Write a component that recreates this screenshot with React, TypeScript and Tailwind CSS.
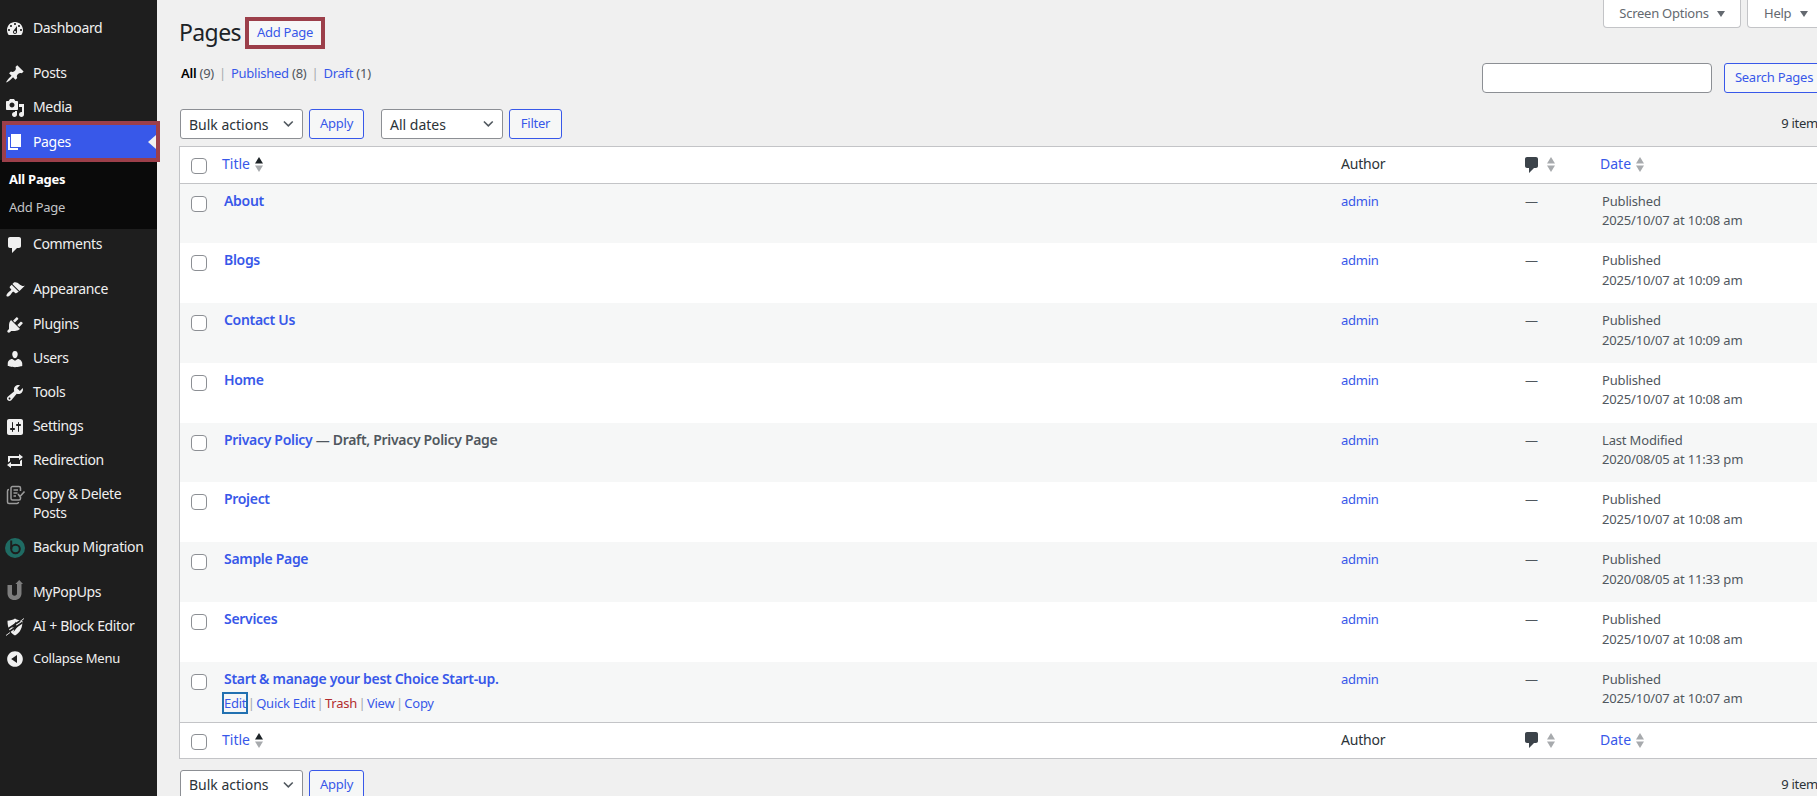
import React from "react";

const P: Record<string, string> = {
  dashboard: "M3.76 16h12.48c1.1-1.37 1.76-3.11 1.76-5 0-4.42-3.58-8-8-8s-8 3.58-8 8c0 1.89.66 3.63 1.76 5zM10 4c.55 0 1 .45 1 1s-.45 1-1 1-1-.45-1-1 .45-1 1-1zM6 6c.55 0 1 .45 1 1s-.45 1-1 1-1-.45-1-1 .45-1 1-1zm8 0c.55 0 1 .45 1 1s-.45 1-1 1-1-.45-1-1 .45-1 1-1zm-5.37 5.55L12 7v6c0 1.1-.9 2-2 2s-2-.9-2-2c0-.57.24-1.08.63-1.45zM4 10c.55 0 1 .45 1 1s-.45 1-1 1-1-.45-1-1 .45-1 1-1zm12 0c.55 0 1 .45 1 1s-.45 1-1 1-1-.45-1-1 .45-1 1-1zm-5 3c0-.55-.45-1-1-1s-1 .45-1 1 .45 1 1 1 1-.45 1-1z",
  post: "M10.44 3.02l1.82-1.82 6.36 6.35-1.83 1.82c-1.05-.68-2.48-.57-3.41.36l-.75.75c-.92.93-1.04 2.35-.35 3.41l-1.83 1.82-2.41-2.41-2.8 2.79c-.42.42-3.38 2.71-3.8 2.29s1.86-3.39 2.28-3.81l2.79-2.79L4.1 9.36l1.83-1.82c1.05.69 2.48.57 3.4-.36l.75-.75c.93-.92 1.05-2.35.36-3.41z",
  media: "M13 11V4c0-.55-.45-1-1-1h-1.67L9 1H5L3.67 3H2c-.55 0-1 .45-1 1v7c0 .55.45 1 1 1h10c.55 0 1-.45 1-1zM7 4.5c1.38 0 2.5 1.12 2.5 2.5S8.38 9.5 7 9.5 4.5 8.38 4.5 7 5.62 4.5 7 4.5zM14 6h5v10.5c0 1.38-1.12 2.5-2.5 2.5S14 17.88 14 16.5s1.12-2.5 2.5-2.5c.17 0 .34.02.5.05V9h-3V6zm-4 8.05V13h2v3.5c0 1.38-1.12 2.5-2.5 2.5S7 17.88 7 16.5 8.12 14 9.5 14c.17 0 .34.02.5.05z",
  page: "M6 15V2h10v13H6zm-1 1h8v2H3V5h2v11z",
  comment: "M5 2h9c1.1 0 2 .9 2 2v7c0 1.1-.9 2-2 2h-2l-5 5v-5H5c-1.1 0-2-.9-2-2V4c0-1.1.9-2 2-2z",
  appearance: "M14.48 11.06L7.41 3.99l1.5-1.5c.5-.56 2.3-.47 3.51.32 1.21.8 1.43 1.28 2.91 2.1 1.18.64 2.45 1.26 4.45.85zM13.77 11.77L6.7 4.7 4.93 6.47c-.39.39-.39 1.02 0 1.41l1.06 1.06c.39.39.39 1.03 0 1.42-.6.6-1.43 1.11-2.21 1.69-.35.26-.7.53-1.01.84-1.22 1.21-1.71 2.72-1.06 3.36.65.65 2.16.16 3.37-1.06.31-.31.58-.66.84-1.01.58-.78 1.09-1.61 1.69-2.21.39-.39 1.03-.39 1.42 0l1.06 1.06c.39.39 1.02.39 1.41 0z",
  plugins: "M13.11 4.36L9.87 7.6 8 5.73l3.24-3.24c.35-.34 1.05-.2 1.56.32.52.51.66 1.21.31 1.55zm-8 1.77l.91-1.12 9.01 9.01-1.19.84c-.71.71-2.63 1.16-3.82 1.16H6.14L4.9 17.26c-.59.59-1.54.59-2.12 0-.59-.58-.59-1.53 0-2.12l1.24-1.24v-3.88c0-1.13.4-3.19 1.09-3.89zm7.26 3.97l3.24-3.24c.34-.35 1.04-.21 1.55.31.52.51.66 1.21.31 1.55l-3.24 3.25z",
  users: "M10 9.25c-2.27 0-2.73-3.44-2.73-3.44C7 4.02 7.82 2 9.97 2c2.16 0 2.98 2.02 2.71 3.81 0 0-.41 3.44-2.68 3.44zm0 2.57L12.72 10c2.39 0 4.52 2.33 4.52 4.53v2.49s-3.65 1.13-7.24 1.13c-3.65 0-7.24-1.13-7.24-1.13v-2.49c0-2.25 1.94-4.48 4.47-4.48z",
  tools: "M16.68 9.77c-1.34 1.34-3.3 1.67-4.95.99l-5.41 6.52c-.99.99-2.59.99-3.58 0s-.99-2.59 0-3.57l6.52-5.42c-.68-1.65-.35-3.61.99-4.95 1.28-1.28 3.12-1.62 4.72-1.06l-2.89 2.89 2.82 2.82 2.86-2.87c.53 1.58.18 3.39-1.08 4.65zM3.81 16.21c.4.39 1.04.39 1.43 0 .4-.4.4-1.04 0-1.43-.39-.4-1.03-.4-1.43 0-.39.39-.39 1.03 0 1.43z",
  settings: "M18 16V4c0-1.1-.9-2-2-2H4c-1.1 0-2 .9-2 2v12c0 1.1.9 2 2 2h12c1.1 0 2-.9 2-2zM8 11h1c.55 0 1 .45 1 1s-.45 1-1 1H8v1.5c0 .28-.22.5-.5.5s-.5-.22-.5-.5V13H6c-.55 0-1-.45-1-1s.45-1 1-1h1V5.5c0-.28.22-.5.5-.5s.5.22.5.5V11zm5-2h-1c-.55 0-1-.45-1-1s.45-1 1-1h1V5.5c0-.28.22-.5.5-.5s.5.22.5.5V7h1c.55 0 1 .45 1 1s-.45 1-1 1h-1v5.5c0 .28-.22.5-.5.5s-.5-.22-.5-.5V9z",
  repeat: "M5 7v3l-2 1.5V5h11V3l4 3.01L14 9V7H5zm10 6v-3l2-1.5V15H6v2l-4-3.01L6 11v2h9z",
  collapse: "M10 2.16c4.33 0 7.84 3.51 7.84 7.84s-3.51 7.84-7.84 7.84S2.16 14.33 2.16 10 5.71 2.16 10 2.16zm2 11.72V6.12L6.18 9.97z",
};

function Dash({ n, className }: { n: string; className?: string }) {
  return (
    <svg viewBox="0 0 20 20" className={className} fill="currentColor" aria-hidden="true">
      <path d={P[n]} />
    </svg>
  );
}

function CopyIcon() {
  return (
    <svg viewBox="0 0 20 20" className="ml-[2px] h-[20px] w-[20px] shrink-0 text-[#9b9b9b]" fill="none" stroke="currentColor" strokeWidth="1.5">
      <path d="M14.500 6V3a1.500 1.500 0 0 0-1.500-1.500H6.500A1.500 1.500 0 0 0 5 3v10.500A1.500 1.500 0 0 0 6.500 15H13a1.500 1.500 0 0 0 1.500-1.500V12" />
      <path d="M3 4.500A1.500 1.500 0 0 0 1.500 6v11A1.500 1.500 0 0 0 3 18.500h8A1.500 1.500 0 0 0 12.500 17" />
      <path d="M7.500 5h4.500M7.500 8h4M7.500 11h2.500" />
      <path d="M12 9l2 2.500 4.500-5" strokeWidth="1.600" />
    </svg>
  );
}

function BackupIcon() {
  return (
    <svg viewBox="0 0 20 20" className="h-[20px] w-[20px] shrink-0">
      <circle cx="10" cy="10" r="10" fill="#1f6b63" />
      <circle cx="10.500" cy="11" r="4.300" fill="none" stroke="#1e1e1e" strokeWidth="2" />
      <path d="M6.200 2.500v8.500" stroke="#1e1e1e" strokeWidth="2" fill="none" />
    </svg>
  );
}

function PopUpsIcon() {
  return (
    <svg viewBox="0 0 20 20" className="-mt-[3px] h-[20px] w-[20px] shrink-0 text-[#7d7d7d]" fill="currentColor">
      <path d="M2.500 5H7v8.500c0 1.300 1 2.200 2.500 2.200s2.500-.9 2.500-2.200V4h-1.600L14.200 0 18 4h-1.500v9.500c0 3.800-3 6.500-7 6.500s-7-2.700-7-6.500z" />
    </svg>
  );
}

function AiIcon() {
  return (
    <svg viewBox="0 0 20 20" className="h-[20px] w-[20px] shrink-0 text-[#f0f0f0]" fill="currentColor">
      <path d="M10 1.500c2.200 1.400 4.500 2 7.500 2.200 0 6.500-1.800 11.500-7.500 14.800C4.300 15.200 2.500 10.200 2.500 3.700 5.500 3.500 7.800 2.900 10 1.500z" />
      <path d="M2 12.500L18 2M3 15.500L17.500 5.500" stroke="#1e1e1e" strokeWidth="1.600" />
      <path d="M11 4.500L7 10.500h2.500L8.500 15l5-6.500H11z" fill="#1e1e1e" />
      <path d="M1 18.500L5 15.500" stroke="#f0f0f0" strokeWidth="0.900" />
      <path d="M15 4.500L19 1.500" stroke="#f0f0f0" strokeWidth="0.900" />
    </svg>
  );
}

type Item = { label: React.ReactNode; icon: React.ReactNode; cls: string };

const dash = (n: string) => <Dash n={n} className="h-[20px] w-[20px] shrink-0 text-[#f0f0f0]" />;

function Menu({ label, icon, cls }: Item) {
  return (
    <div className={`flex items-start ${cls}`}>
      <div className="flex w-[30px] shrink-0 justify-center pt-[7px]">{icon}</div>
      <div className="ml-[3px] py-[6px] text-[14px] leading-[19.6px] tracking-[-0.35px] text-[#f0f0f0]">{label}</div>
    </div>
  );
}

function Sidebar() {
  return (
    <aside className="w-[157px] shrink-0 bg-[#1e1e1e] pt-[12px]">
      <Menu label="Dashboard" icon={dash("dashboard")} cls="h-[32px] mb-[13px]" />
      <Menu label="Posts" icon={dash("post")} cls="h-[34px]" />
      <Menu label="Media" icon={dash("media")} cls="h-[34px]" />
      <div className="relative z-10 ml-[6px] mb-[1px] flex h-[33px] w-[150px] items-center bg-[#3858e9] outline-[4px] outline-[#9c3f4a]">
        <div className="flex w-[18px] shrink-0 justify-center"><Dash n="page" className="h-[20px] w-[20px] shrink-0 text-white" /></div>
        <div className="ml-[9px] pb-[1px] text-[14px] tracking-[-0.35px] text-white">Pages</div>
        <div className="absolute right-0 top-[9.500px] h-0 w-0 border-y-[7px] border-r-[8px] border-y-transparent border-r-[#f0f0f0]" />
      </div>
      <div className="mt-[2px] bg-[#0a0a0a] pb-[8px] pl-[9px] pt-[5px] text-[13px] leading-[18px]">
        <div className="py-[5px] font-bold text-white">All Pages</div>
        <div className="py-[5px] text-[#c3c4c7]">Add Page</div>
      </div>
      <Menu label="Comments" icon={dash("comment")} cls="h-[34px] mb-[10.500px] mt-[-1px]" />
      <Menu label="Appearance" icon={dash("appearance")} cls="h-[35px]" />
      <Menu label="Plugins" icon={dash("plugins")} cls="h-[34.200px]" />
      <Menu label="Users" icon={dash("users")} cls="h-[34.200px]" />
      <Menu label="Tools" icon={dash("tools")} cls="h-[34.200px]" />
      <Menu label="Settings" icon={dash("settings")} cls="h-[34.200px]" />
      <Menu label="Redirection" icon={dash("repeat")} cls="h-[33.500px]" />
      <Menu label={<>Copy &amp; Delete<br />Posts</>} icon={<CopyIcon />} cls="h-[53.700px]" />
      <Menu label="Backup Migration" icon={<BackupIcon />} cls="h-[34px] mb-[10.300px]" />
      <Menu label="MyPopUps" icon={<PopUpsIcon />} cls="h-[34px]" />
      <Menu label="AI + Block Editor" icon={<AiIcon />} cls="h-[34px]" />
      <div className="-mt-[2px] flex h-[34px] items-center">
        <div className="flex w-[30px] shrink-0 justify-center"><Dash n="collapse" className="h-[20px] w-[20px] shrink-0 text-[#f0f0f0]" /></div>
        <div className="ml-[3px] text-[13px] text-[#f0f0f0]">Collapse Menu</div>
      </div>
    </aside>
  );
}

function Btn({ children, className = "" }: { children: React.ReactNode; className?: string }) {
  return (
    <div className={`flex h-[30px] shrink-0 items-center justify-center rounded-[3px] border border-[#3858e9] bg-[#f6f7f7] text-[13px] text-[#3858e9] ${className}`}>
      {children}
    </div>
  );
}

function Select({ label, className }: { label: string; className: string }) {
  return (
    <div className={`flex h-[30px] shrink-0 items-center justify-between rounded-[3px] border border-[#8c8f94] bg-white pl-[8px] pr-[8px] text-[14px] tracking-normal text-[#2c3338] ${className}`}>
      <span>{label}</span>
      <svg viewBox="0 0 12 8" className="h-[8px] w-[11px]" fill="none" stroke="#50575e" strokeWidth="1.700"><path d="M1 1.200l4.800 4.800 4.800-4.800" /></svg>
    </div>
  );
}

function Check() {
  return <div className="h-[16px] w-[16px] shrink-0 rounded-[4px] border border-[#8c8f94] bg-white" />;
}

function Sort({ active = false }: { active?: boolean }) {
  return (
    <svg viewBox="0 0 8 15" className="ml-[5px] h-[15px] w-[8px] shrink-0">
      <path d="M4 0l4 6.500H0z" fill={active ? "#1d2327" : "#a7aaad"} />
      <path d="M4 15l4-6.500H0z" fill="#a7aaad" />
    </svg>
  );
}

function Head({ bottom }: { bottom?: boolean }) {
  return (
    <div className={`flex items-center border-[#c3c4c7] bg-white ${bottom ? "h-[36px] border-t" : "h-[36.500px] border-b"}`}>
      <div className="flex w-[42px] shrink-0 justify-end pl-[11px] pr-[15px] pt-[3px]"><Check /></div>
      <div className="flex w-[1119px] shrink-0 items-center text-[14px] tracking-normal text-[#3858e9]"><span className="-mt-[2px]">Title</span><Sort active /></div>
      <div className="-mt-[2px] w-[181px] shrink-0 text-[14px] tracking-[-0.2px] text-[#2c3338]">Author</div>
      <div className="flex w-[78px] shrink-0 items-center">
        <Dash n="comment" className="h-[20px] w-[20px] shrink-0 text-[#3c434a]" />
        <Sort />
      </div>
      <div className="flex items-center text-[14px] tracking-normal text-[#3858e9]"><span className="-mt-[2px]">Date</span><Sort /></div>
    </div>
  );
}

type Row = { title: string; state?: string; status: string; date: string; actions?: boolean };

const rows: Row[] = [
  { title: "About", status: "Published", date: "2025/10/07 at 10:08 am" },
  { title: "Blogs", status: "Published", date: "2025/10/07 at 10:09 am" },
  { title: "Contact Us", status: "Published", date: "2025/10/07 at 10:09 am" },
  { title: "Home", status: "Published", date: "2025/10/07 at 10:08 am" },
  { title: "Privacy Policy", state: " — Draft, Privacy Policy Page", status: "Last Modified", date: "2020/08/05 at 11:33 pm" },
  { title: "Project", status: "Published", date: "2025/10/07 at 10:08 am" },
  { title: "Sample Page", status: "Published", date: "2020/08/05 at 11:33 pm" },
  { title: "Services", status: "Published", date: "2025/10/07 at 10:08 am" },
  { title: "Start & manage your best Choice Start-up.", status: "Published", date: "2025/10/07 at 10:07 am", actions: true },
];

function TableRow({ r, odd }: { r: Row; odd: boolean }) {
  return (
    <div className={`flex h-[59.800px] ${odd ? "bg-[#f6f7f7]" : "bg-white"}`}>
      <div className="flex w-[42px] shrink-0 justify-end pl-[11px] pr-[15px] pt-[12px]"><Check /></div>
      <div className="w-[1119px] shrink-0 pl-[2px] pt-[7px]">
        <div className="text-[14px] font-semibold leading-[20px] tracking-[-0.31px] text-[#50575e]">
          <span className="text-[#3858e9]">{r.title}</span>{r.state}
        </div>
        {r.actions && (
          <div className="mt-[5px] flex text-[13px] leading-[18px] text-[#a7aaad]">
            <span className="text-[#3858e9] outline-[2px] outline-[#2271b1]">Edit</span>
            <span className="mx-[1.500px]">|</span>
            <span className="text-[#3858e9]">Quick Edit</span>
            <span className="mx-[1.500px]">|</span>
            <span className="text-[#b32d2e]">Trash</span>
            <span className="mx-[1.500px]">|</span>
            <span className="text-[#3858e9]">View</span>
            <span className="mx-[1.500px]">|</span>
            <span className="text-[#3858e9]">Copy</span>
          </div>
        )}
      </div>
      <div className="w-[184px] shrink-0 pt-[7px] text-[13px] leading-[20px] text-[#3858e9]">admin</div>
      <div className="w-[75px] shrink-0 pt-[7px] text-[13px] leading-[20px] text-[#50575e]">—</div>
      <div className="pl-[2px] pt-[8px] text-[13px] leading-[19.500px] tracking-[-0.16px] text-[#50575e]">
        <div>{r.status}</div>
        <div>{r.date}</div>
      </div>
    </div>
  );
}

export default function App() {
  return (
    <div className="flex h-[796px] w-[1817px] overflow-hidden bg-[#f0f0f0] font-['Noto_Sans','Open_Sans',sans-serif] text-[13px] tracking-[-0.25px] text-[#3c434a]">
      <Sidebar />
      <main className="w-[1667px] shrink-0 pl-[22px]">
        <div className="relative">
          <div className="absolute left-[1424px] top-0 flex h-[28px] w-[138px] items-center justify-center gap-[8px] rounded-b-[4px] border border-t-0 border-[#c3c4c7] bg-white text-[13px] text-[#646970]">
            Screen Options
            <span className="h-0 w-0 border-x-[4px] border-t-[6px] border-x-transparent border-t-[#646970]" />
          </div>
          <div className="absolute left-[1568px] top-0 flex h-[28px] w-[76px] items-center gap-[9px] rounded-b-[4px] border border-t-0 border-[#c3c4c7] bg-white pl-[16px] text-[13px] text-[#646970]">
            Help
            <span className="h-0 w-0 border-x-[4px] border-t-[6px] border-x-transparent border-t-[#646970]" />
          </div>
        </div>
        <div className="flex h-[63px] items-start pt-[20.500px]">
          <h1 className="-mt-[2.500px] w-[60px] text-[23px] leading-[29px] tracking-[-0.6px] text-[#1d2327]">Pages</h1>
          <div className="ml-[10px] flex h-[24.500px] w-[72px] items-center justify-center bg-[#f6f7f7] text-[13px] text-[#3858e9] outline-[4px] outline-[#9c3f4a]">Add Page</div>
        </div>
        <div className="flex h-[46px] items-start">
          <div className="flex pl-[2px] text-[13px] leading-[20px] text-[#50575e]">
            <b className="font-semibold text-black">All</b>&nbsp;(9)
            <span className="mx-[5px] text-[#a7aaad]">|</span>
            <span className="text-[#3858e9]">Published</span>&nbsp;(8)
            <span className="mx-[5px] text-[#a7aaad]">|</span>
            <span className="text-[#3858e9]">Draft</span>&nbsp;(1)
          </div>
          <div className="ml-auto flex">
            <div className="h-[30px] w-[230px] rounded-[4px] border border-[#8c8f94] bg-white" />
            <Btn className="ml-[12px] w-[100px]">Search Pages</Btn>
          </div>
        </div>
        <div className="flex h-[37px] items-start">
          <Select label="Bulk actions" className="ml-[1px] w-[123px]" />
          <Btn className="ml-[6px] w-[55px]">Apply</Btn>
          <Select label="All dates" className="ml-[17px] w-[122px]" />
          <Btn className="ml-[6px] w-[53px]">Filter</Btn>
          <div className="ml-auto pt-[4px] leading-[20px] text-[#2c3338]">9 items</div>
        </div>
        <div className="border border-[#c3c4c7] bg-white">
          <Head />
          {rows.map((r, i) => <TableRow key={r.title} r={r} odd={i % 2 === 0} />)}
          <Head bottom />
        </div>
        <div className="mt-[11px] flex items-start">
          <Select label="Bulk actions" className="ml-[1px] w-[123px]" />
          <Btn className="ml-[6px] w-[55px]">Apply</Btn>
          <div className="ml-auto pt-[4px] leading-[20px] text-[#2c3338]">9 items</div>
        </div>
      </main>
    </div>
  );
}
